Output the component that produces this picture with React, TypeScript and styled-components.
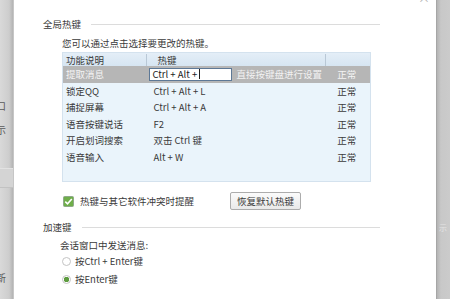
import React from 'react'
import styled, { createGlobalStyle } from 'styled-components'

const GlobalStyle = createGlobalStyle`
  html, body {
    margin: 0;
    padding: 0;
    background: #ffffff;
  }
  body {
    font-family: 'Noto Sans CJK SC', 'Microsoft YaHei', sans-serif;
  }
`

type HotkeyRow = {
  name: string
  key: string
  status: string
}

const rows: HotkeyRow[] = [
  { name: '锁定QQ', key: 'Ctrl + Alt + L', status: '正常' },
  { name: '捕捉屏幕', key: 'Ctrl + Alt + A', status: '正常' },
  { name: '语音按键说话', key: 'F2', status: '正常' },
  { name: '开启划词搜索', key: '双击 Ctrl 键', status: '正常' },
  { name: '语音输入', key: 'Alt + W', status: '正常' },
]

function CheckIcon() {
  return (
    <svg width="11" height="11" viewBox="0 0 11 11">
      <rect x="0.5" y="0.5" width="10" height="10" rx="1" fill="#6fae4a" stroke="#8fa88a" />
      <path d="M2.3 5.6 L4.5 7.8 L8.8 3.0" fill="none" stroke="#ffffff" strokeWidth="1.6" />
    </svg>
  )
}

function App() {
  return (
    <Screen>
      <GlobalStyle />
      <LeftStrip>
        <StripLabel $mt={100}>口</StripLabel>
        <StripLabel $mt={12}>示</StripLabel>
        <StripDivider $mt={32} />
        <StripLabel $mt={84}>新</StripLabel>
      </LeftStrip>
      <Dialog>
        <CloseMark>×</CloseMark>
        <SectionTitle>
          <span>全局热键</span>
          <TitleLine />
        </SectionTitle>
        <Hint>您可以通过点击选择要更改的热键。</Hint>
        <Table>
          <HeaderRow>
            <HeadCell $w={85} $pl={3}>功能说明</HeadCell>
            <HeadCell $w={180} $pl={10}>热键</HeadCell>
            <HeadCell $w={44} $pl={0} $last />
          </HeaderRow>
          <Row $selected>
            <Cell $w={85} $pl={3}>提取消息</Cell>
            <Cell $w={180} $pl={2}>
              <KeyInput>
                Ctrl + Alt + <Caret />
              </KeyInput>
              <InputHint>直接按键盘进行设置</InputHint>
            </Cell>
            <Cell $w={44} $pl={11}>正常</Cell>
          </Row>
          {rows.map((r) => (
            <Row key={r.name}>
              <Cell $w={85} $pl={3}>{r.name}</Cell>
              <Cell $w={180} $pl={6}>{r.key}</Cell>
              <Cell $w={44} $pl={11}>{r.status}</Cell>
            </Row>
          ))}
        </Table>
        <CheckRow>
          <CheckIcon />
          <CheckLabel>热键与其它软件冲突时提醒</CheckLabel>
          <ResetButton>恢复默认热键</ResetButton>
        </CheckRow>
        <SectionTitle $mt={10}>
          <span>加速键</span>
          <TitleLine />
        </SectionTitle>
        <SubHint>会话窗口中发送消息:</SubHint>
        <RadioRow>
          <Radio />
          <span>按Ctrl + Enter键</span>
        </RadioRow>
        <RadioRow>
          <Radio $checked />
          <span>按Enter键</span>
        </RadioRow>
      </Dialog>
      <RightStrip>
        <FaintLabel>示</FaintLabel>
      </RightStrip>
    </Screen>
  )
}

const Screen = styled.div`
  display: flex;
  width: 450px;
  height: 299px;
  overflow: hidden;
  font-size: 9.5px;
  color: #3a3a3a;
`

const LeftStrip = styled.div`
  width: 14px;
  flex-shrink: 0;
  display: flex;
  flex-direction: column;
  overflow: hidden;
  background: linear-gradient(to right, #d9d9d9 0%, #cdcdcd 70%, #b3b3b3 100%);
  border-right: 1px solid #c6c6c6;
  box-sizing: border-box;
`

const StripLabel = styled.div<{ $mt: number }>`
  margin-top: ${(p) => p.$mt}px;
  margin-left: -4px;
  font-size: 10px;
  line-height: 12px;
  color: #5a5a5a;
`

const StripDivider = styled.div<{ $mt: number }>`
  margin-top: ${(p) => p.$mt}px;
  height: 18px;
  border-top: 1px solid #e2e2e2;
  border-bottom: 1px solid #c2c2c2;
  background: #d4d4d4;
`

const Dialog = styled.div`
  position: relative;
  flex: 1;
  display: flex;
  flex-direction: column;
  padding: 17px 56px 0 29px;
  background: #ffffff;
`

const CloseMark = styled.div`
  position: absolute;
  top: -11px;
  right: 6px;
  font-size: 12px;
  color: #b0b0b0;
`

const SectionTitle = styled.div<{ $mt?: number }>`
  display: flex;
  align-items: center;
  gap: 10px;
  height: 14px;
  margin-top: ${(p) => p.$mt ?? 0}px;
  color: #3a3a3a;
  white-space: nowrap;
`

const TitleLine = styled.div`
  flex: 1;
  height: 0;
  border-top: 1px solid #dcdcdc;
`

const Hint = styled.div`
  margin: 5px 0 0 19px;
  height: 14px;
  line-height: 14px;
  white-space: nowrap;
`

const Table = styled.div`
  margin: 2px 0 0 19px;
  width: 309px;
  height: 130px;
  box-sizing: border-box;
  border: 1px solid #d4e2ee;
  background: #eaf4fb;
  display: flex;
  flex-direction: column;
`

const HeaderRow = styled.div`
  display: flex;
  height: 13px;
  background: linear-gradient(to bottom, #e4eef7, #d6e5f2);
`

const HeadCell = styled.div<{ $w: number; $pl: number; $last?: boolean }>`
  width: ${(p) => p.$w}px;
  padding-left: ${(p) => p.$pl}px;
  box-sizing: border-box;
  line-height: 13px;
  border-right: ${(p) => (p.$last ? 'none' : '1px solid #b9c8d6')};
  margin: ${(p) => (p.$last ? '0' : '1px 0 0 0')};
  white-space: nowrap;
`

const Row = styled.div<{ $selected?: boolean }>`
  display: flex;
  align-items: center;
  height: 16.5px;
  background: ${(p) => (p.$selected ? '#b6b6b6' : 'transparent')};
  color: ${(p) => (p.$selected ? '#f4f4f4' : '#3a3a3a')};
`

const Cell = styled.div<{ $w: number; $pl: number }>`
  display: flex;
  align-items: center;
  width: ${(p) => p.$w}px;
  padding-left: ${(p) => p.$pl}px;
  box-sizing: border-box;
  white-space: nowrap;
  overflow: hidden;
`

const KeyInput = styled.div`
  display: flex;
  align-items: center;
  width: 83px;
  height: 13px;
  box-sizing: border-box;
  padding-left: 2px;
  border: 1px solid #5d7896;
  background: #ffffff;
  color: #222222;
`

const Caret = styled.span`
  display: inline-block;
  width: 1px;
  height: 10px;
  margin-left: 2px;
  background: #222222;
`

const InputHint = styled.span`
  margin-left: 4px;
  color: #f2f2f2;
`

const CheckRow = styled.div`
  display: flex;
  align-items: center;
  height: 18px;
  margin: 10px 0 0 20px;
`

const CheckLabel = styled.span`
  margin-left: 6px;
  white-space: nowrap;
`

const ResetButton = styled.div`
  margin-left: 36px;
  width: 71px;
  height: 18px;
  box-sizing: border-box;
  border: 1px solid #acacac;
  border-radius: 2px;
  background: linear-gradient(to bottom, #fbfbfb, #e9e9e9);
  display: flex;
  align-items: center;
  justify-content: center;
  white-space: nowrap;
`

const SubHint = styled.div`
  margin: 4px 0 0 17px;
  height: 14px;
  line-height: 14px;
`

const RadioRow = styled.div`
  display: flex;
  align-items: center;
  gap: 4px;
  height: 18px;
  margin-left: 19px;
  white-space: nowrap;
`

const Radio = styled.span<{ $checked?: boolean }>`
  width: 9px;
  height: 9px;
  box-sizing: border-box;
  border-radius: 50%;
  border: 1px solid #c4c4c4;
  background: ${(p) =>
    p.$checked ? 'radial-gradient(circle, #5e9c40 0 2.5px, #ffffff 3px)' : '#ffffff'};
`

const RightStrip = styled.div`
  width: 14px;
  flex-shrink: 0;
  display: flex;
  flex-direction: column;
  overflow: hidden;
  background: linear-gradient(to right, #b4b4b4 0%, #c8c8c8 30%, #cbcbcb 100%);
  border-left: 1px solid #a6a6a6;
  box-sizing: border-box;
`

const FaintLabel = styled.div`
  margin-top: 222px;
  margin-left: 2px;
  font-size: 8px;
  color: #e4e4e4;
`

export default App
